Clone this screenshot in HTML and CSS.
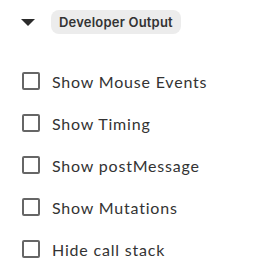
FILE: index.html
```html
<!DOCTYPE html>
<html>

<head>
    <meta name="viewport" content="width=device-width, initial-scale=1.0">
    <title>Developer Output</title>
    <link rel="stylesheet" href="styles.css">
</head>

<body>
    <div class="section">
        <div class="section-head">
            <span class="caret"></span>
            <span class="pill">Developer Output</span>
        </div>

        <ul class="options">
            <li><label><input type="checkbox"><span>Show Mouse Events</span></label></li>
            <li><label><input type="checkbox"><span>Show Timing</span></label></li>
            <li><label><input type="checkbox"><span>Show postMessage</span></label></li>
            <li><label><input type="checkbox"><span>Show Mutations</span></label></li>
            <li><label><input type="checkbox"><span>Hide call stack</span></label></li>
        </ul>
    </div>
</body>

</html>
```

FILE: styles.css
```css
* {
    box-sizing: border-box;
}

body {
    margin: 0;
    background: #fff;
    color: #2b2b2b;
    font-family: Inter, "Open Sans", sans-serif;
}

.section {
    padding: 10px 0 0 21px;
}

.section-head {
    display: flex;
    align-items: center;
    height: 24px;
}

.caret {
    width: 0;
    height: 0;
    border-left: 7px solid transparent;
    border-right: 7px solid transparent;
    border-top: 7px solid #2b2b2b;
    margin-right: 16px;
}

.pill {
    background: #ececec;
    border-radius: 8px;
    padding: 0 8px;
    height: 24px;
    line-height: 24px;
    font-size: 13px;
    font-weight: 600;
    color: #333;
    letter-spacing: 0.2px;
}

.options {
    list-style: none;
    margin: 38px 0 0 1px;
    padding: 0;
}

.options li {
    height: 42px;
}

.options label {
    display: flex;
    align-items: center;
    height: 18px;
}

.options input {
    appearance: none;
    margin: 0 12px 0 0;
    width: 18px;
    height: 18px;
    border: 2px solid #666;
    border-radius: 2px;
    background: #fff;
}

.options span {
    font-family: Lato, sans-serif;
    font-size: 16px;
    color: #333;
    letter-spacing: 0.8px;
}
```
